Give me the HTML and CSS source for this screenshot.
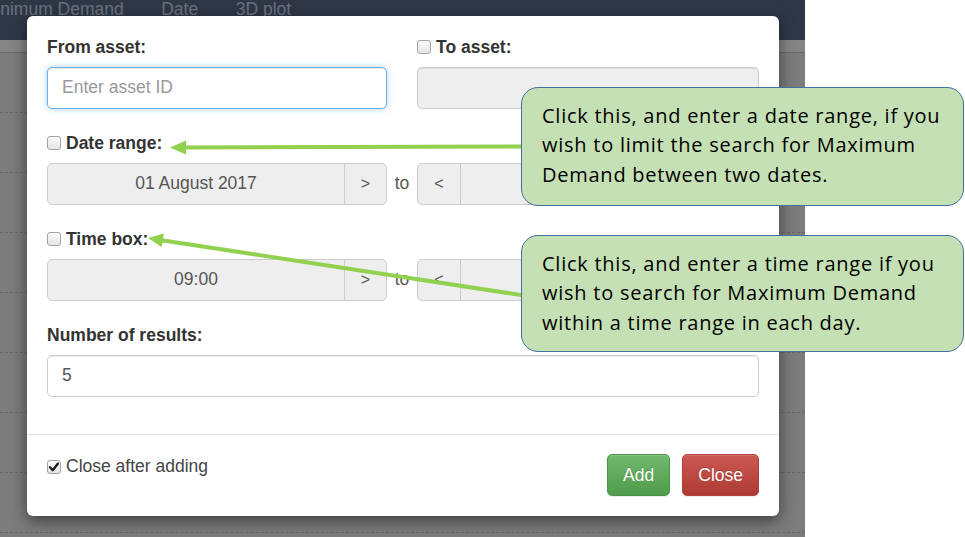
FILE: index.html
```html
<!DOCTYPE html>
<html>
<head>
<meta charset="utf-8">
<title>Maximum Demand search</title>
<link rel="stylesheet" href="styles.css">
</head>
<body>
<div class="screen">
  <div class="app">
    <nav class="navbar">
      <ul class="nav">
        <li>Minimum Demand</li>
        <li>Date</li>
        <li>3D plot</li>
      </ul>
    </nav>
    <div class="subbar"></div>
    <div class="rows">
      <div class="row"></div><div class="row"></div><div class="row"></div><div class="row"></div>
      <div class="row"></div><div class="row"></div><div class="row"></div><div class="row"></div>
    </div>
  </div>
  <div class="blank"></div>
</div>

<div class="modal">
  <div class="modal-body">
    <div class="form-group range">
      <div class="col">
        <label class="lbl">From asset:</label>
        <input class="form-control focus" type="text" placeholder="Enter asset ID">
      </div>
      <div></div>
      <div class="col">
        <label class="lbl"><span class="cb"></span>To asset:</label>
        <input class="form-control" type="text" disabled>
      </div>
    </div>

    <div class="form-group">
      <label class="lbl"><span class="cb"></span>Date range:</label>
      <div class="range">
        <div class="igroup"><div class="iv">01 August 2017</div><div class="addon">&gt;</div></div>
        <div class="to">to</div>
        <div class="igroup"><div class="addon left">&lt;</div><div class="iv"></div></div>
      </div>
    </div>

    <div class="form-group">
      <label class="lbl"><span class="cb"></span>Time box:</label>
      <div class="range">
        <div class="igroup"><div class="iv">09:00</div><div class="addon">&gt;</div></div>
        <div class="to">to</div>
        <div class="igroup"><div class="addon left">&lt;</div><div class="iv"></div></div>
      </div>
    </div>

    <div class="form-group last">
      <label class="lbl">Number of results:</label>
      <input class="form-control white" type="text" value="5">
    </div>
  </div>
  <div class="modal-footer">
    <label class="chk-label"><span class="cb checked"><svg viewBox="0 0 14 14" width="14" height="14"><path d="M3 7.2 L5.8 10.2 L11 3.6" fill="none" stroke="#1e1e1e" stroke-width="2.4" stroke-linecap="round" stroke-linejoin="round"/></svg></span>Close after adding</label>
    <div class="buttons">
      <button class="btn btn-success">Add</button>
      <button class="btn btn-danger">Close</button>
    </div>
  </div>
</div>

<svg class="arrows" viewBox="0 0 965 537" width="965" height="537">
  <line x1="182" y1="147.5" x2="524" y2="146.5" stroke="#92d050" stroke-width="4"/>
  <polygon points="170,147.5 186,140.5 186,154.5" fill="#92d050"/>
  <line x1="160" y1="240" x2="524" y2="295.5" stroke="#92d050" stroke-width="4"/>
  <polygon points="148,238 163.9,233.4 161.7,247.2" fill="#92d050"/>
</svg>

<div class="callout callout-date">Click this, and enter a date range, if you<br>wish to limit the search for Maximum<br>Demand between two dates.</div>
<div class="callout callout-time">Click this, and enter a time range if you<br>wish to search for Maximum Demand<br>within a time range in each day.</div>
</body>
</html>
```

FILE: styles.css
```css
html, body {
  margin: 0;
  padding: 0;
  width: 965px;
  height: 537px;
  overflow: hidden;
  background: #ffffff;
  font-family: "Liberation Sans", Arial, sans-serif;
}

.screen {
  display: flex;
  width: 965px;
  height: 537px;
}

.app {
  width: 805px;
  height: 537px;
  display: flex;
  flex-direction: column;
  background: #7c7c7c;
  overflow: hidden;
}

.blank {
  flex: 1;
  background: #ffffff;
}

.navbar {
  height: 40px;
  background: #2f3747;
  flex: none;
}

.nav {
  list-style: none;
  margin: 0 0 0 -37px;
  padding: 0;
  display: flex;
}

.nav li {
  padding: 0 18.75px;
  font-size: 17.5px;
  line-height: 18px;
  color: #6b7280;
  white-space: nowrap;
}

.subbar {
  height: 12px;
  background: #858585;
  border-bottom: 1px solid #6a6a6a;
  flex: none;
}

.rows {
  display: flex;
  flex-direction: column;
}

.row {
  height: 59px;
  border-bottom: 1px dashed #676767;
  flex: none;
}

/* modal */
.modal {
  position: absolute;
  left: 27px;
  top: 16px;
  width: 752px;
  background: #ffffff;
  border-radius: 6px;
  box-shadow: 0 5px 16px rgba(0, 0, 0, 0.5);
  color: #333333;
  font-size: 17.5px;
}

.modal-body {
  padding: 18.5px 20px 37.5px;
}

.form-group {
  margin-bottom: 22px;
}

.form-group.last {
  margin-bottom: 0;
}

.range {
  display: grid;
  grid-template-columns: 340px 30px 1fr;
}

.col {
  display: flex;
  flex-direction: column;
}

.lbl {
  display: flex;
  align-items: center;
  height: 25px;
  margin-bottom: 7px;
  font-weight: bold;
  font-size: 17.5px;
  color: #333333;
}

.cb {
  width: 14px;
  height: 14px;
  box-sizing: border-box;
  border: 1px solid #a3a3a3;
  border-radius: 3px;
  background: linear-gradient(#fbfbfb, #e4e4e4);
  margin-right: 5px;
  flex: none;
  display: flex;
  align-items: center;
  justify-content: center;
}

.cb svg {
  display: block;
  margin: -1px;
}

.form-control {
  box-sizing: border-box;
  width: 100%;
  height: 42px;
  margin: 0;
  padding: 0 14px;
  border: 1px solid #cccccc;
  border-radius: 5px;
  background: #eeeeee;
  font-family: "Liberation Sans", Arial, sans-serif;
  font-size: 17.5px;
  color: #555555;
  outline: none;
  box-shadow: inset 0 1px 1px rgba(0, 0, 0, 0.075);
}

.form-control.white {
  background: #ffffff;
}

.form-control.focus {
  background: #ffffff;
  border-color: #66afe9;
  box-shadow: inset 0 1px 1px rgba(0, 0, 0, 0.075), 0 0 6px rgba(102, 175, 233, 0.55);
}

.form-control::placeholder {
  color: #999999;
}

.igroup {
  display: flex;
  height: 42px;
  box-sizing: border-box;
  border: 1px solid #cccccc;
  border-radius: 5px;
  background: #eeeeee;
  color: #555555;
}

.iv {
  flex: 1;
  display: flex;
  align-items: center;
  justify-content: center;
}

.addon {
  width: 41px;
  flex: none;
  display: flex;
  align-items: center;
  justify-content: center;
  border-left: 1px solid #cccccc;
  font-size: 16px;
  color: #555555;
}

.addon.left {
  width: 42px;
  border-left: none;
  border-right: 1px solid #cccccc;
}

.to {
  display: flex;
  align-items: center;
  justify-content: center;
  color: #555555;
}

.modal-footer {
  border-top: 1px solid #e5e5e5;
  padding: 19px 20px 20px;
  display: flex;
  justify-content: space-between;
  align-items: flex-start;
}

.chk-label {
  display: flex;
  align-items: center;
  height: 25px;
  color: #444444;
}

.buttons {
  display: flex;
  gap: 12px;
}

.btn {
  height: 42px;
  padding: 0 15px;
  border-radius: 5px;
  border: 1px solid transparent;
  font-family: "Liberation Sans", Arial, sans-serif;
  font-size: 17.5px;
  color: #ffffff;
  text-shadow: 0 -1px 0 rgba(0, 0, 0, 0.2);
  box-shadow: inset 0 1px 0 rgba(255, 255, 255, 0.15), 0 1px 1px rgba(0, 0, 0, 0.075);
}

.btn-success {
  background: linear-gradient(#72b86e, #4f9b4b);
  border-color: #4a934a;
}

.btn-danger {
  background: linear-gradient(#cb5852, #ad3a33);
  border-color: #b0403a;
}

/* annotation overlay */
.arrows {
  position: absolute;
  left: 0;
  top: 0;
  pointer-events: none;
}

.callout {
  position: absolute;
  left: 521px;
  width: 443px;
  box-sizing: border-box;
  padding: 12.5px 0 0 20px;
  background: #c5e0b4;
  border: 1px solid #41719c;
  border-radius: 17px;
  font-family: "Open Sans", "Noto Sans", sans-serif;
  font-size: 20px;
  letter-spacing: 0.75px;
  line-height: 29.5px;
  color: #000000;
  white-space: nowrap;
}

.callout-date {
  top: 87px;
  height: 119px;
}

.callout-time {
  top: 235px;
  height: 117px;
}
```
